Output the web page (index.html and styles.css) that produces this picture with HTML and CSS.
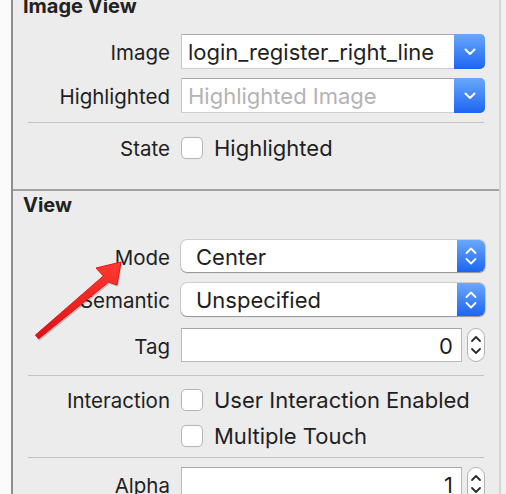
FILE: index.html
```html
<!DOCTYPE html>
<html>
<head>
<meta charset="utf-8">
<link rel="stylesheet" href="styles.css">
</head>
<body>
<div class="window">
  <div class="gutter"></div>
  <div class="panel">
    <section class="sec sec-image">
      <h2 class="title title-image">Image View</h2>
      <div class="row row-image">
        <div class="label">Image</div>
        <div class="combo">
          <div class="combo-text">login_register_right_line</div>
          <div class="blue-btn blue-combo">
            <svg width="12" height="8" viewBox="0 0 12 8"><path d="M1.5 1.5 L6 6 L10.5 1.5" fill="none" stroke="#fff" stroke-width="2" stroke-linecap="round" stroke-linejoin="round"/></svg>
          </div>
        </div>
      </div>
      <div class="row row-high">
        <div class="label">Highlighted</div>
        <div class="combo">
          <div class="combo-text placeholder">Highlighted Image</div>
          <div class="blue-btn blue-combo">
            <svg width="12" height="8" viewBox="0 0 12 8"><path d="M1.5 1.5 L6 6 L10.5 1.5" fill="none" stroke="#fff" stroke-width="2" stroke-linecap="round" stroke-linejoin="round"/></svg>
          </div>
        </div>
      </div>
      <div class="divider"></div>
      <div class="row row-check row-state">
        <div class="label">State</div>
        <label class="check"><span class="box"></span><span class="check-text">Highlighted</span></label>
      </div>
    </section>
    <section class="sec sec-view">
      <h2 class="title title-view">View</h2>
      <div class="row row-mode">
        <div class="label">Mode</div>
        <div class="popup">
          <div class="popup-text">Center</div>
          <div class="blue-btn blue-popup">
            <svg width="12" height="20" viewBox="0 0 12 20"><path d="M1.5 7 L6 2.5 L10.5 7 M1.5 13 L6 17.5 L10.5 13" fill="none" stroke="#fff" stroke-width="1.8" stroke-linecap="round" stroke-linejoin="round"/></svg>
          </div>
        </div>
      </div>
      <div class="row row-sem">
        <div class="label">Semantic</div>
        <div class="popup">
          <div class="popup-text">Unspecified</div>
          <div class="blue-btn blue-popup">
            <svg width="12" height="20" viewBox="0 0 12 20"><path d="M1.5 7 L6 2.5 L10.5 7 M1.5 13 L6 17.5 L10.5 13" fill="none" stroke="#fff" stroke-width="1.8" stroke-linecap="round" stroke-linejoin="round"/></svg>
          </div>
        </div>
      </div>
      <div class="row row-tag">
        <div class="label">Tag</div>
        <div class="numfield">
          <div class="field">0</div>
          <div class="stepper">
            <svg width="12" height="26" viewBox="0 0 12 26"><path d="M2 9 L6 5 L10 9 M2 17 L6 21 L10 17" fill="none" stroke="#2a2a2a" stroke-width="1.8" stroke-linecap="round" stroke-linejoin="round"/></svg>
          </div>
        </div>
      </div>
      <div class="divider divider-b"></div>
      <div class="row row-check row-inter">
        <div class="label">Interaction</div>
        <label class="check"><span class="box"></span><span class="check-text">User Interaction Enabled</span></label>
      </div>
      <div class="row row-check row-multi">
        <div class="label"></div>
        <label class="check"><span class="box"></span><span class="check-text">Multiple Touch</span></label>
      </div>
      <div class="divider divider-c"></div>
      <div class="row row-alpha">
        <div class="label">Alpha</div>
        <div class="numfield">
          <div class="field">1</div>
          <div class="stepper">
            <svg width="12" height="26" viewBox="0 0 12 26"><path d="M2 9 L6 5 L10 9 M2 17 L6 21 L10 17" fill="none" stroke="#2a2a2a" stroke-width="1.8" stroke-linecap="round" stroke-linejoin="round"/></svg>
          </div>
        </div>
      </div>
    </section>
  </div>
  <div class="edge"></div>
</div>
<svg class="arrow" width="506" height="494" viewBox="0 0 506 494">
  <defs>
    <linearGradient id="ag" x1="0" y1="0" x2="0" y2="1">
      <stop offset="0" stop-color="#ff3a2f"/>
      <stop offset="1" stop-color="#dc1118"/>
    </linearGradient>
  </defs>
  <polygon points="35.4,335.1 103.4,275.9 96,268 121,262 117,285 108.6,282.1 38.6,338.9" fill="rgba(0,0,0,0.2)" transform="translate(1,1.8)"/>
  <polygon points="35.4,335.1 103.4,275.9 96,268 121,262 117,285 108.6,282.1 38.6,338.9" fill="url(#ag)" stroke="#e3151c" stroke-width="1" stroke-linejoin="round"/>
</svg>
</body>
</html>
```
FILE: styles.css
```css
html, body {
  margin: 0;
  padding: 0;
  background: #ffffff;
}
body {
  width: 506px;
  height: 494px;
  overflow: hidden;
  position: relative;
  font-family: "Inter", "Liberation Sans", sans-serif;
  color: #1f1f1f;
}
.window {
  display: flex;
  height: 494px;
}
.gutter {
  width: 11px;
  background: #fbfbfb;
}
.panel {
  width: 486px;
  border-left: 2px solid #8e8e8e;
  background: #ececec;
  overflow: hidden;
}
.edge {
  width: 2px;
  background: #d6d6d6;
}
.window::after {
  content: "";
  flex: 1;
  background: #f1f1f1;
}
.sec {
  display: flow-root;
}
.sec-image {
  height: 189px;
  border-bottom: 2px solid #a2a2a2;
}
.title {
  margin: 0;
  font-size: 20px;
  font-weight: 700;
  line-height: 20px;
  padding-left: 10px;
  color: #222;
}
.title-image {
  margin-top: -4px;
}
.title-view {
  margin-top: 4px;
}
.row {
  display: grid;
  grid-template-columns: 1fr 304px;
  column-gap: 11px;
  padding-right: 14px;
  align-items: center;
  font-size: 22px;
}
.label {
  text-align: right;
  white-space: nowrap;
  font-size: 20.5px;
  padding-top: 2px;
}
.row-check .label {
  padding-top: 0;
}
.row-image { margin-top: 18px; height: 34px; }
.row-high { margin-top: 10px; height: 33px; }
.divider {
  height: 1px;
  background: #c3c3c3;
  margin: 11px 15px 0 15px;
}
.row-state { margin-top: 12px; height: 22px; }

.combo {
  display: flex;
  height: 100%;
  background: #fff;
  border-top: 1px solid #a9a9a9;
  border-left: 1px solid #c4c4c4;
  border-bottom: 1px solid #cfcfcf;
  border-radius: 0 5px 5px 0;
  box-sizing: border-box;
}
.combo-text {
  flex: 1;
  padding-left: 6px;
  padding-top: 2px;
  line-height: 31px;
  white-space: nowrap;
  overflow: hidden;
}
.placeholder { color: #b3b3b3; }
.blue-btn {
  display: flex;
  align-items: center;
  justify-content: center;
  background: linear-gradient(#6aa8fb, #1c65f2);
}
.blue-combo {
  width: 31px;
  margin: -1px 0 -1px 0;
  border-radius: 0 5px 5px 0;
}
.popup {
  display: flex;
  height: 100%;
  background: #fff;
  border-radius: 6px;
  box-shadow: 0 0 0 1px rgba(0, 0, 0, 0.13), 0 1px 1px rgba(0, 0, 0, 0.28);
  overflow: hidden;
}
.popup-text {
  flex: 1;
  padding-left: 15px;
  padding-top: 2px;
  line-height: 31px;
}
.blue-popup {
  width: 28px;
}
.row-mode { margin-top: 25px; height: 32px; }
.row-sem { margin-top: 11px; height: 33px; }
.row-tag { margin-top: 12px; height: 34px; }
.numfield {
  display: flex;
  height: 100%;
  gap: 5px;
}
.field {
  flex: 1;
  background: #fff;
  border: 1px solid #b9b9b9;
  border-top-color: #a6a6a6;
  box-sizing: border-box;
  text-align: right;
  padding-right: 8px;
  padding-top: 2px;
  line-height: 30px;
}
.stepper {
  width: 18px;
  box-sizing: border-box;
  border: 1px solid #b3b3b3;
  border-radius: 9px;
  background: #fff;
  display: flex;
  align-items: center;
  justify-content: center;
}
.divider-b { margin-top: 13px; }
.row-inter { margin-top: 11px; height: 22px; }
.row-multi { margin-top: 14px; height: 22px; }
.divider-c { margin-top: 12px; }
.row-alpha { margin-top: 9px; height: 34px; }

.check {
  display: flex;
  align-items: center;
  gap: 11px;
}
.box {
  width: 22px;
  height: 22px;
  box-sizing: border-box;
  border: 1px solid #b2b2b2;
  border-radius: 5px;
  background: #fff;
  flex: none;
}
.check-text { white-space: nowrap; }
.arrow {
  position: absolute;
  left: 0;
  top: 0;
  pointer-events: none;
}
```
